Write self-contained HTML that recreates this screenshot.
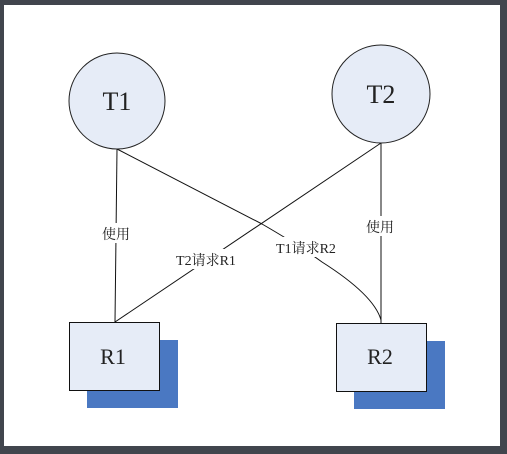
<!DOCTYPE html>
<html><head><meta charset="utf-8"><style>
html,body{margin:0;padding:0;width:507px;height:454px;overflow:hidden;background:#41454d}
svg{display:block}
text{font-family:"Liberation Serif","Noto Serif CJK SC",serif;fill:#222}
</style></head><body>
<svg width="507" height="454" viewBox="0 0 507 454">
<rect x="0" y="0" width="507" height="454" fill="#41454d"/>
<rect x="4" y="5" width="496" height="441" fill="#fff"/>
<g stroke="#111" stroke-width="1" fill="none">
<line x1="117" y1="149" x2="115" y2="322"/>
<line x1="381" y1="143" x2="381" y2="323"/>
<line x1="381" y1="143" x2="115" y2="322"/>
<path d="M117 149 L262 224 Q300 246 322 262 Q374 295 381 320"/>
</g>
<circle cx="117" cy="101" r="48" fill="#e6ecf7" stroke="#222" stroke-width="1"/>
<circle cx="381" cy="94" r="49" fill="#e6ecf7" stroke="#222" stroke-width="1"/>
<rect x="87" y="340" width="91" height="68" fill="#4a78c2"/>
<rect x="354" y="341" width="91" height="68" fill="#4a78c2"/>
<rect x="69.5" y="322.5" width="90" height="68" fill="#e6ecf7" stroke="#111"/>
<rect x="336.5" y="323.5" width="90" height="68" fill="#e6ecf7" stroke="#111"/>
<text x="117" y="110" font-size="26" text-anchor="middle">T1</text>
<text x="381" y="103" font-size="26" text-anchor="middle">T2</text>
<text x="113" y="364" font-size="22" text-anchor="middle">R1</text>
<text x="380" y="364" font-size="22" text-anchor="middle">R2</text>
<rect x="98" y="223" width="36" height="20" fill="#fff"/>
<text x="116" y="239" font-size="14" text-anchor="middle">使用</text>
<rect x="362" y="216" width="36" height="20" fill="#fff"/>
<text x="380" y="232" font-size="14" text-anchor="middle">使用</text>
<rect x="171" y="249" width="70" height="20" fill="#fff"/>
<text x="206" y="265" font-size="14" text-anchor="middle">T2请求R1</text>
<rect x="271" y="237" width="70" height="20" fill="#fff"/>
<text x="306" y="253" font-size="14" text-anchor="middle">T1请求R2</text>
</svg>
</body></html>
